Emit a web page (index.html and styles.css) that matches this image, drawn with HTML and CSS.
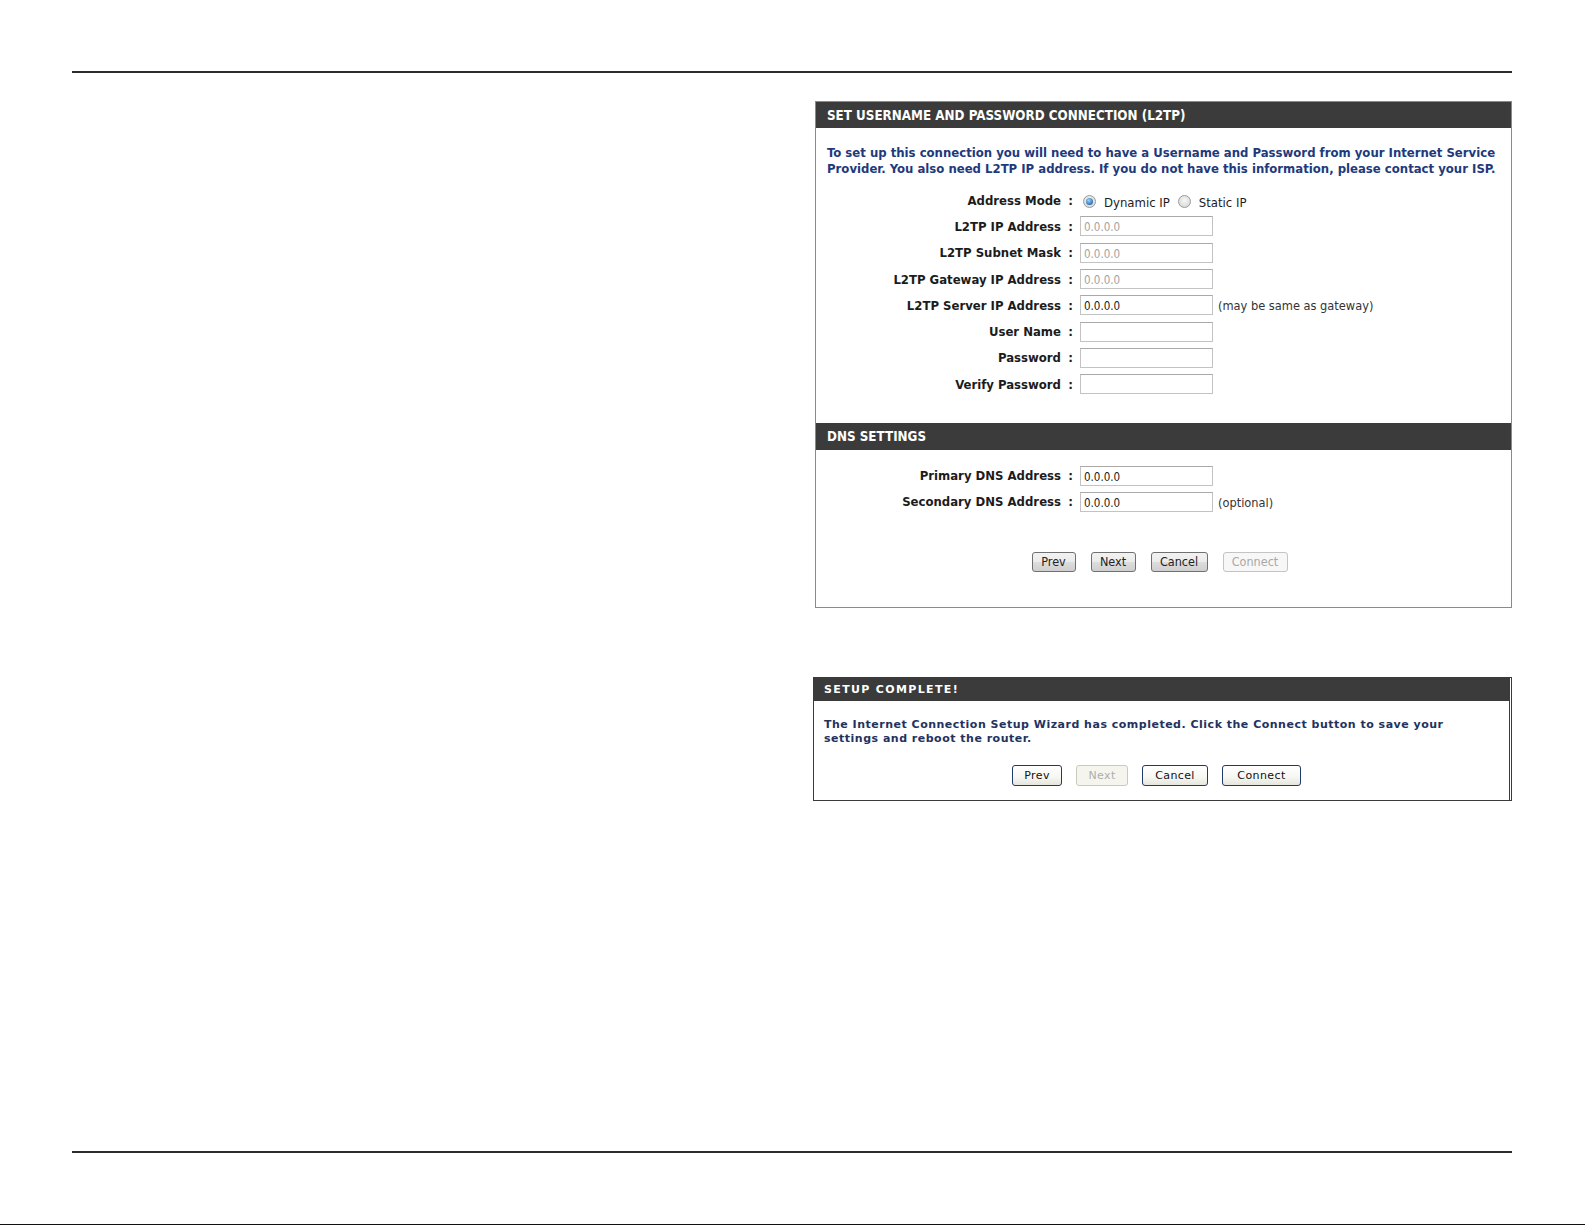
FILE: index.html
```html
<!DOCTYPE html>
<html>
<head>
    <title>L2TP Setup</title>
    <link rel="stylesheet" href="styles.css">
</head>
<body>
    <div class="page">
        <div class="rule"></div>

        <div class="main">
            <div class="panel">
                <div class="panel-head">SET USERNAME AND PASSWORD CONNECTION (L2TP)</div>
                <p class="intro">To set up this connection you will need to have a Username and Password from your Internet Service
                    Provider. You also need L2TP IP address. If you do not have this information, please contact your ISP.</p>

                <div class="form">
                    <div class="label">Address Mode</div>
                    <div class="colon">:</div>
                    <div class="field">
                        <span class="radio checked"></span><span class="opt">Dynamic IP</span>
                        <span class="radio"></span><span class="opt">Static IP</span>
                    </div>

                    <div class="label">L2TP IP Address</div>
                    <div class="colon">:</div>
                    <div class="field"><input class="box" type="text" value="0.0.0.0" disabled></div>

                    <div class="label">L2TP Subnet Mask</div>
                    <div class="colon">:</div>
                    <div class="field"><input class="box" type="text" value="0.0.0.0" disabled></div>

                    <div class="label">L2TP Gateway IP Address</div>
                    <div class="colon">:</div>
                    <div class="field"><input class="box" type="text" value="0.0.0.0" disabled></div>

                    <div class="label">L2TP Server IP Address</div>
                    <div class="colon">:</div>
                    <div class="field"><input class="box" type="text" value="0.0.0.0"><span class="note">(may be same as gateway)</span></div>

                    <div class="label">User Name</div>
                    <div class="colon">:</div>
                    <div class="field"><input class="box" type="text"></div>

                    <div class="label">Password</div>
                    <div class="colon">:</div>
                    <div class="field"><input class="box" type="password"></div>

                    <div class="label">Verify Password</div>
                    <div class="colon">:</div>
                    <div class="field"><input class="box" type="password"></div>
                </div>

                <div class="panel-head dns-head">DNS SETTINGS</div>

                <div class="form dns">
                    <div class="label">Primary DNS Address</div>
                    <div class="colon">:</div>
                    <div class="field"><input class="box" type="text" value="0.0.0.0"></div>

                    <div class="label">Secondary DNS Address</div>
                    <div class="colon">:</div>
                    <div class="field"><input class="box" type="text" value="0.0.0.0"><span class="note">(optional)</span></div>
                </div>

                <div class="buttons">
                    <button class="btn w-prev">Prev</button>
                    <button class="btn w-next">Next</button>
                    <button class="btn w-cancel">Cancel</button>
                    <button class="btn w-connect" disabled>Connect</button>
                </div>
            </div>

            <div class="panel done">
                <div class="done-head">SETUP COMPLETE!</div>
                <p class="done-text">The Internet Connection Setup Wizard has completed. Click the Connect button to save your<br>
                    settings and reboot the router.</p>
                <div class="done-buttons">
                    <button class="xbtn x-prev">Prev</button>
                    <button class="xbtn x-next" disabled>Next</button>
                    <button class="xbtn x-cancel">Cancel</button>
                    <button class="xbtn x-connect">Connect</button>
                </div>
            </div>
        </div>

        <div class="rule"></div>
        <div class="edge"></div>
    </div>
</body>
</html>
```

FILE: styles.css
```css
:root {
    --head: #3b3b3b;
    --navy: #1e3a7d;
    --navy-dark: #23325e;
    --label: #1c1c1c;
}

body {
    margin: 0;
    background: #fff;
    font-family: 'DejaVu Sans Condensed', 'DejaVu Sans', sans-serif;
}

.page {
    display: flex;
    flex-direction: column;
    height: 1225px;
    padding-top: 71px;
    box-sizing: border-box;
}

.rule {
    height: 2px;
    margin: 0 73px 0 72px;
    background: #2b2b2b;
}

.edge {
    height: 1px;
    margin-top: 71px;
    background: #111;
}

.main {
    flex: 1;
    display: flex;
    flex-direction: column;
    align-items: flex-end;
    padding: 28px 73px 0 0;
}

.panel {
    width: 697px;
    box-sizing: border-box;
    border: 1px solid #8a8a8a;
    padding-bottom: 35px;
}

.panel-head {
    height: 26px;
    line-height: 28px;
    padding-left: 11px;
    background: var(--head);
    color: #fff;
    font-weight: bold;
    font-size: 13.3px;
}

.intro {
    margin: 17px 11px 10px;
    font-size: 13px;
    line-height: 16px;
    font-weight: bold;
    color: var(--navy);
}

.form {
    display: grid;
    grid-template-columns: 245px 19px 1fr;
    grid-auto-rows: 26.3px;
    align-items: center;
    font-size: 13px;
    color: var(--label);
}

.label {
    text-align: right;
    font-weight: bold;
}

.colon {
    text-align: center;
    font-weight: bold;
}

.field {
    display: flex;
    align-items: center;
}

.box {
    width: 133px;
    height: 20px;
    box-sizing: border-box;
    margin: 0;
    padding: 2px 3px 0;
    border: 1px solid #c3c3c3;
    border-top-color: #a9a9a9;
    background: #fff;
    font-family: 'DejaVu Sans Condensed', 'DejaVu Sans', sans-serif;
    font-size: 11.5px;
    color: #222;
}

.box:disabled {
    color: #a3a3a3;
    background: #fff;
}

.note {
    margin-left: 5px;
    margin-top: 1px;
    font-size: 12.7px;
    color: #333;
}

.radio {
    width: 11px;
    height: 11px;
    margin: 2px 8px 0 3px;
    border-radius: 50%;
    border: 1px solid #9a9a9a;
    background: radial-gradient(circle at 50% 40%, #f6f6f6 0%, #d2d2d2 100%);
    position: relative;
}

.radio.checked::after {
    content: "";
    position: absolute;
    left: 2px;
    top: 2px;
    width: 7px;
    height: 7px;
    border-radius: 50%;
    background: radial-gradient(circle at 40% 35%, #9fd3f5 0%, #2a73b8 70%, #1b4f8a 100%);
}

.opt {
    margin-top: 4px;
    margin-right: 5px;
    font-size: 13px;
}

.dns-head {
    height: 27px;
    margin-top: 26px;
}

.dns {
    margin-top: 12px;
}

.buttons {
    display: flex;
    justify-content: center;
    gap: 15px;
    margin-top: 37px;
    padding-right: 8px;
}

.btn {
    height: 20px;
    padding: 0;
    border: 1px solid #707070;
    border-radius: 3px;
    background: linear-gradient(#f2f2f2 0%, #ebebeb 50%, #dddddd 51%, #cfcfcf 100%);
    font-family: 'DejaVu Sans Condensed', 'DejaVu Sans', sans-serif;
    font-size: 12.5px;
    color: #222;
}

.btn:disabled {
    border-color: #c4c4c4;
    background: #f7f7f7;
    color: #a8a8a8;
}

.w-prev { width: 44px; }
.w-next { width: 45px; }
.w-cancel { width: 57px; }
.w-connect { width: 65px; }

.done {
    margin-top: 69px;
    width: 699px;
    border: 1px solid #3a3a3a;
    border-right: 3px double #3a3a3a;
    padding-bottom: 14px;
}

.done-head {
    height: 23px;
    line-height: 24px;
    padding-left: 10px;
    background: var(--head);
    color: #fff;
    font-family: 'DejaVu Sans', sans-serif;
    font-weight: bold;
    font-size: 11px;
    letter-spacing: 1.35px;
}

.done-text {
    margin: 17px 10px 19px;
    font-family: 'DejaVu Sans', sans-serif;
    font-size: 11px;
    line-height: 14px;
    font-weight: bold;
    letter-spacing: 0.5px;
    color: var(--navy-dark);
}

.done-buttons {
    display: flex;
    justify-content: center;
    gap: 14px;
    padding-right: 10px;
}

.xbtn {
    height: 21px;
    padding: 0;
    border: 1px solid #1f3a6b;
    border-radius: 3px;
    background: linear-gradient(#ffffff 0%, #f6f6f2 60%, #e6e6de 100%);
    font-family: 'DejaVu Sans', sans-serif;
    font-size: 11px;
    letter-spacing: 0.4px;
    color: #111;
}

.xbtn:disabled {
    border-color: #cacabc;
    background: #f5f5ee;
    color: #adadad;
}

.x-prev { width: 50px; }
.x-next { width: 52px; }
.x-cancel { width: 66px; }
.x-connect { width: 79px; }
```
